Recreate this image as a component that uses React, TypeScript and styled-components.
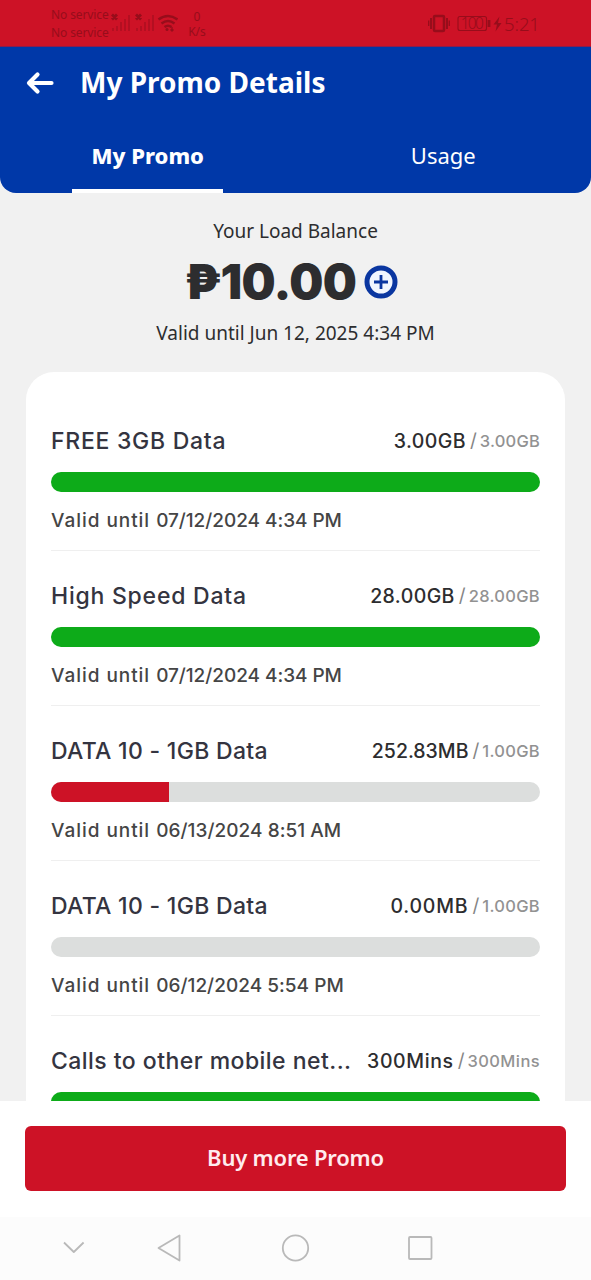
import React from 'react';
import styled, { createGlobalStyle } from 'styled-components';

const GlobalStyle = createGlobalStyle`
  * { box-sizing: border-box; }
  body { margin: 0; background: #f1f1f1; }
`;

const display = `'Noto Sans', 'Open Sans', sans-serif`;
const body = `Inter, 'Liberation Sans', sans-serif`;

const Screen = styled.div`
  display: flex;
  flex-direction: column;
  width: 591px;
  height: 1280px;
  overflow: hidden;
  background: #f1f1f1;
  color: #2d2d2f;
  font-family: ${display};
`;

const StatusBar = styled.div`
  display: flex;
  justify-content: space-between;
  flex: none;
  height: 47px;
  padding: 0 51px;
  background: #cd1226;
  border-bottom: 1px solid #8a1c4e;
  color: #970d1b;
`;

const StatusGroup = styled.div`
  display: flex;
  align-items: flex-start;
`;

const Carrier = styled.div`
  width: 59px;
  padding-top: 6px;
  font-size: 12px;
  line-height: 18px;
  letter-spacing: -0.1px;
  white-space: nowrap;
`;

const Speed = styled.div`
  width: 20px;
  margin-left: 9px;
  padding-top: 9px;
  font-size: 12px;
  line-height: 15px;
  text-align: center;
`;

const Clock = styled.span`
  width: 38px;
  padding: 11px 0 0 2px;
  font-size: 18.5px;
  font-weight: 300;
  line-height: 26px;
  letter-spacing: -0.1px;
`;

const Header = styled.header`
  flex: none;
  height: 146px;
  border-radius: 0 0 16px 16px;
  background: #0038a8;
  color: #fff;
`;

const TitleBar = styled.div`
  display: flex;
  align-items: center;
  height: 72px;
  padding-left: 26px;
`;

const PageTitle = styled.h1`
  margin: 0 0 2px 26px;
  font-size: 28px;
  font-weight: 700;
  line-height: 36px;
  letter-spacing: 0;
  white-space: nowrap;
`;

const Tabs = styled.nav`
  display: flex;
  height: 74px;
`;

const Tab = styled.div<{ $active?: boolean }>`
  display: flex;
  flex: 1;
  flex-direction: column;
  align-items: center;
  justify-content: space-between;
  padding-top: 20px;
  font-size: 22px;
  font-weight: ${p => (p.$active ? 800 : 400)};
  line-height: 32px;
  letter-spacing: 0;

  &::after {
    content: '';
    width: 151px;
    height: 4px;
    background: ${p => (p.$active ? '#fff' : 'transparent')};
  }
`;

const Content = styled.main`
  display: flex;
  flex: none;
  flex-direction: column;
  height: 908px;
  padding: 0 26px;
  overflow: hidden;
`;

const Balance = styled.section`
  display: flex;
  flex: none;
  flex-direction: column;
  align-items: center;
  height: 179px;
  padding-top: 25px;
`;

const Caption = styled.div`
  font-size: 19px;
  line-height: 26px;
  white-space: nowrap;
`;

const AmountRow = styled.div`
  display: flex;
  align-items: center;
  gap: 8px;
  height: 76px;
  margin-right: 8px;
`;

const Amount = styled.strong`
  font-family: ${body};
  font-size: 48px;
  font-weight: 900;
  line-height: 60px;
  letter-spacing: -0.6px;
`;

const Card = styled.section`
  flex: none;
  padding: 24px 25px 0;
  border-radius: 28px 28px 0 0;
  background: #fff;
  font-family: ${body};
`;

const PromoRow = styled.article`
  height: 155px;
  padding-top: 30px;
  border-bottom: 1px solid #efefef;
`;

const PromoHead = styled.div`
  display: flex;
  align-items: center;
  justify-content: space-between;
  height: 30px;
  white-space: nowrap;
`;

const PromoName = styled.h2<{ $spacing: string }>`
  margin: 0;
  color: #343440;
  font-size: 23px;
  font-weight: 500;
  line-height: 30px;
  letter-spacing: ${p => p.$spacing};
`;

const Quota = styled.div`
  display: flex;
  align-items: center;
  line-height: 30px;
`;

const Remaining = styled.span<{ $spacing: string }>`
  font-size: 19.5px;
  font-weight: 500;
  letter-spacing: ${p => p.$spacing};
`;

const Total = styled.span<{ $spacing: string }>`
  color: #929292;
  font-size: 16.5px;
  font-weight: 500;
  letter-spacing: ${p => p.$spacing};
`;

const Slash = styled.span`
  margin: 0 3px 0 4px;
  color: #858585;
  font-size: 19px;
`;

const Meter = styled.div`
  height: 20px;
  margin-top: 16px;
  overflow: hidden;
  border-radius: 10px;
  background: #dcdedd;
`;

const MeterFill = styled.div<{ $low?: boolean }>`
  height: 100%;
  background: ${p => (p.$low ? '#cd1226' : '#0dab19')};
`;

const Validity = styled.div`
  margin-top: 14px;
  color: #454545;
  font-size: 19px;
  font-weight: 500;
  line-height: 30px;
  letter-spacing: 0.96px;
  white-space: nowrap;
`;

const Expiry = styled.time<{ $spacing?: string }>`
  letter-spacing: ${p => p.$spacing};
`;

const Footer = styled.footer`
  flex: none;
  height: 116px;
  padding: 25px 25px 0;
  background: #fff;
`;

const BuyButton = styled.button`
  display: block;
  width: 541px;
  height: 65px;
  padding: 0 0 3px;
  border: 0;
  border-radius: 6px;
  background: #cd1226;
  color: #ffecee;
  font-family: ${display};
  font-size: 22px;
  font-weight: 600;
  letter-spacing: -0.2px;
`;

const SystemNav = styled.nav`
  display: flex;
  align-items: center;
  flex: 1;
  padding: 0 0 2px 62px;
  background: #fcfcfc;
`;

type Promo = {
  name: string;
  ns: string;
  left: string;
  ls: string;
  total: string;
  ts: string;
  fill: number;
  low?: boolean;
  until?: string;
  vs?: string;
};

const promos: Promo[] = [
  { name: 'FREE 3GB Data', ns: '0.72px', left: '3.00GB', ls: '0.4px', total: '3.00GB', ts: '0.2px', fill: 100, until: '07/12/2024 4:34 PM', vs: '-0.04px' },
  { name: 'High Speed Data', ns: '0.77px', left: '28.00GB', ls: '0.4px', total: '28.00GB', ts: '0.3px', fill: 100, until: '07/12/2024 4:34 PM', vs: '-0.04px' },
  { name: 'DATA 10 - 1GB Data', ns: '0.3px', left: '252.83MB', ls: '0', total: '1.00GB', ts: '0.3px', fill: 24.2, low: true, until: '06/13/2024 8:51 AM', vs: '0.05px' },
  { name: 'DATA 10 - 1GB Data', ns: '0.3px', left: '0.00MB', ls: '0.8px', total: '1.00GB', ts: '0.3px', fill: 0, until: '06/12/2024 5:54 PM', vs: '0.03px' },
  { name: 'Calls to other mobile net...', ns: '0.46px', left: '300Mins', ls: '0.6px', total: '300Mins', ts: '0.4px', fill: 100 },
];

const StatusIcons = () => (
  <svg width="68" height="46" viewBox="110 0 68 46" fill="none" stroke="#970d1b">
    <g strokeWidth="2.8">
      <path d="M112 14.500l5 5m0-5l-5 5M136 14.500l5 5m0-5l-5 5" />
    </g>
    <g strokeWidth="2" opacity=".45">
      <path d="M113 31v-3M117 31v-5M121 31v-9M125 31V19M129 31V15" />
      <path d="M137 31v-3M141 31v-5M145 31v-9M149 31V19M153 31V15" />
    </g>
    <g strokeWidth="2.500">
      <path d="M158.500 19.500q9.500-7 19 0M161.500 23.500q6.500-5 13 0M164.500 27q3.500-2.500 7 0" />
    </g>
    <circle cx="167" cy="29.500" r="1.500" fill="#970d1b" stroke="none" />
    <path d="M172 27v4m-1.500-1.500l1.500 1.500 1.500-1.500" strokeWidth="1.300" />
  </svg>
);

const PowerIcons = () => (
  <svg width="74" height="46" viewBox="428 0 74 46" fill="none" stroke="#970d1b">
    <rect x="434" y="16" width="10" height="15" rx="1" strokeWidth="2.500" />
    <path d="M431 18v11M447 18v11" strokeWidth="2" />
    <path d="M428.700 20.500v5.500M449.300 20.500v5.500" strokeWidth="1.300" />
    <rect x="458" y="16.500" width="28.500" height="14" rx="2" strokeWidth="1.100" />
    <path d="M489 20v7" strokeWidth="2.800" />
    <path d="M499.500 16.500l-6 8h3.500l-1.500 7 6-8.500h-3.500z" fill="#970d1b" stroke="none" />
    <text x="472.300" y="29.300" textAnchor="middle" fill="#970d1b" stroke="none" fontFamily="Noto Sans" fontSize="15.500" fontWeight="300" textLength="23">100</text>
  </svg>
);

const App = () => (
  <>
    <GlobalStyle />
    <Screen>
      <StatusBar>
        <StatusGroup>
          <Carrier>No service<br />No service</Carrier>
          <StatusIcons />
          <Speed>0<br />K/s</Speed>
        </StatusGroup>
        <StatusGroup>
          <PowerIcons />
          <Clock>5:21</Clock>
        </StatusGroup>
      </StatusBar>
      <Header>
        <TitleBar>
          <svg width="28" height="24" viewBox="0 0 28 24" fill="none" stroke="#fff" strokeWidth="4.200" strokeLinecap="round" strokeLinejoin="round">
            <path d="M11.500 3.500L3 12l8.500 8.500M3.500 12H25.500" />
          </svg>
          <PageTitle>My Promo Details</PageTitle>
        </TitleBar>
        <Tabs>
          <Tab $active>My Promo</Tab>
          <Tab>Usage</Tab>
        </Tabs>
      </Header>
      <Content>
        <Balance>
          <Caption>Your Load Balance</Caption>
          <AmountRow>
            <Amount>₱10.00</Amount>
            <svg width="34" height="34" viewBox="0 0 34 34" fill="none" stroke="#0a36a0">
              <circle cx="17" cy="17" r="14" fill="#f1f6ff" strokeWidth="5" />
              <path d="M17 10v14M10 17h14" strokeWidth="2.800" />
            </svg>
          </AmountRow>
          <Caption>Valid until Jun 12, 2025 4:34 PM</Caption>
        </Balance>
        <Card>
          {promos.map((p, i) => (
            <PromoRow key={i}>
              <PromoHead>
                <PromoName $spacing={p.ns}>{p.name}</PromoName>
                <Quota>
                  <Remaining $spacing={p.ls}>{p.left}</Remaining>
                  <Slash>/</Slash>
                  <Total $spacing={p.ts}>{p.total}</Total>
                </Quota>
              </PromoHead>
              <Meter>
                <MeterFill $low={p.low} style={{ width: `${p.fill}%` }} />
              </Meter>
              {p.until && (
                <Validity>
                  Valid until <Expiry $spacing={p.vs}>{p.until}</Expiry>
                </Validity>
              )}
            </PromoRow>
          ))}
        </Card>
      </Content>
      <Footer>
        <BuyButton>Buy more Promo</BuyButton>
      </Footer>
      <SystemNav>
        <svg width="390" height="34" viewBox="62 1231 390 34" fill="none" stroke="#b9b9b9" strokeWidth="1.800" strokeLinejoin="round">
          <path d="M64 1242.500l9.800 9.500 9.800-9.500" />
          <path d="M158.500 1248l21-12.500v25z" />
          <circle cx="295.500" cy="1248" r="12.700" />
          <rect x="409" y="1237" width="22.500" height="22" rx="1" />
        </svg>
      </SystemNav>
    </Screen>
  </>
);

export default App;
